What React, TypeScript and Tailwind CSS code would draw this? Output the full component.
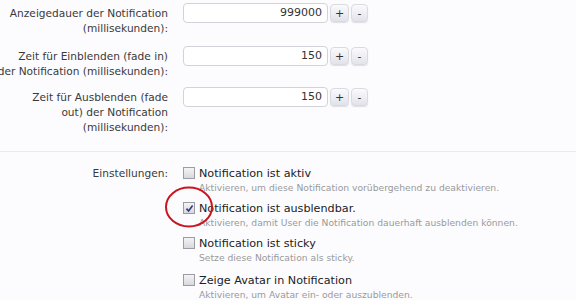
import React from "react";

function NumRow({ lines, value, h }: { lines: string[]; value: string; h: string }) {
  return (
    <div className={`flex items-start ${h}`}>
      <div className="w-[168px] shrink-0 flex flex-col items-end pt-[3px] text-[10.6px] leading-[15px] text-[#3a3a3a]">
        {lines.map((l, i) => (
          <span key={i} className="whitespace-nowrap">
            {l}
          </span>
        ))}
      </div>
      <div className="ml-[15px] w-[145px] h-[20px] shrink-0 rounded-[4px] border border-[#d2d2da] bg-white text-right pr-[5px] text-[11px] leading-[18px] text-[#333]">
        {value}
      </div>
      <div className="ml-[2px] mt-[1px] w-[19px] h-[18px] rounded-[4px] border border-[#dadae2] bg-gradient-to-b from-[#fbfbfd] to-[#e2e2ea] shadow-[0_1px_1px_rgba(0,0,0,0.12)] flex items-center justify-center text-[11px] leading-none text-[#333]">
        +
      </div>
      <div className="ml-[2px] mt-[1px] w-[17px] h-[18px] rounded-[4px] border border-[#dadae2] bg-gradient-to-b from-[#fbfbfd] to-[#e2e2ea] shadow-[0_1px_1px_rgba(0,0,0,0.12)] flex items-center justify-center text-[11px] leading-none text-[#333]">
        -
      </div>
    </div>
  );
}

function Check({ checked, label, hint, cls }: { checked?: boolean; label: string; hint: string; cls: string }) {
  return (
    <div className={`flex items-start ${cls}`}>
      <div className="mt-[1px] w-[12px] h-[12px] shrink-0 border border-[#9c9ca4] bg-gradient-to-b from-[#f4f4f6] to-[#d8d8de] flex items-center justify-center">
        {checked && (
          <svg width="9" height="9" viewBox="0 0 9 9">
            <path d="M1.5 4.6 L3.6 7 L7.6 1.6" fill="none" stroke="#2b3a86" strokeWidth="1.6" />
          </svg>
        )}
      </div>
      <div className="ml-[4px] flex flex-col">
        <span className="whitespace-nowrap text-[11.2px] leading-[15px] text-[#222]">{label}</span>
        <span className="whitespace-nowrap text-[9.2px] leading-[14px] text-[#9a9a9a]">{hint}</span>
      </div>
    </div>
  );
}

export default function App() {
  return (
    <div className="relative w-[576px] h-[300px] overflow-hidden bg-[#fcfcfe] font-['DejaVu_Sans',sans-serif]">
      <div className="pt-[3px]">
        <NumRow h="h-[43px]" lines={["Anzeigedauer der Notification", "(millisekunden):"]} value="999000" />
        <NumRow h="h-[41px]" lines={["Zeit für Einblenden (fade in)", "der Notification (millisekunden):"]} value="150" />
        <NumRow h="h-[64px]" lines={["Zeit für Ausblenden (fade", "out) der Notification", "(millisekunden):"]} value="150" />
      </div>
      <div className="h-px bg-[#e2edf1]" />
      <div className="flex items-start pt-[14px]">
        <div className="w-[168px] shrink-0 text-right text-[10.6px] leading-[15px] text-[#3a3a3a]">Einstellungen:</div>
        <div className="ml-[15px] flex flex-col">
          <Check cls="h-[35px]" label="Notification ist aktiv" hint="Aktivieren, um diese Notification vorübergehend zu deaktivieren." />
          <Check cls="h-[35px]" checked label="Notification ist ausblendbar." hint="Aktivieren, damit User die Notification dauerhaft ausblenden können." />
          <Check cls="h-[37px]" label="Notification ist sticky" hint="Setze diese Notification als sticky." />
          <Check cls="h-[35px]" label="Zeige Avatar in Notification" hint="Aktivieren, um Avatar ein- oder auszublenden." />
        </div>
      </div>
      <svg className="absolute left-[164px] top-[186px]" width="50" height="44" viewBox="0 0 50 44">
        <ellipse cx="25" cy="21" rx="23" ry="19.5" fill="none" stroke="#c8151f" strokeWidth="2" />
      </svg>
    </div>
  );
}
